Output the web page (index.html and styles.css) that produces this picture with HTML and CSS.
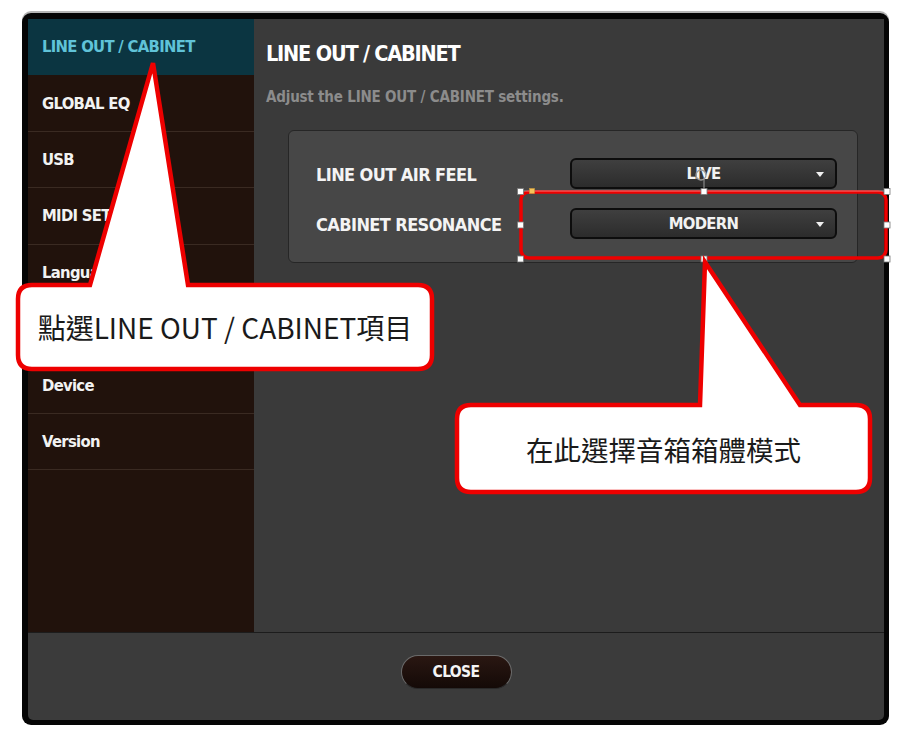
FILE: index.html
```html
<!DOCTYPE html>
<html lang="zh-Hant">
<head>
<meta charset="utf-8">
<title>LINE OUT / CABINET</title>
<link rel="stylesheet" href="styles.css">
</head>
<body>
<div class="window">
  <div class="main">
    <nav class="sidebar">
      <div class="nav-item active">LINE OUT / CABINET</div>
      <div class="nav-item">GLOBAL EQ</div>
      <div class="nav-item">USB</div>
      <div class="nav-item">MIDI SETTINGS</div>
      <div class="nav-item">Language</div>
      <div class="nav-item"></div>
      <div class="nav-item">Device</div>
      <div class="nav-item">Version</div>
    </nav>
    <section class="content">
      <h1 class="title">LINE OUT / CABINET</h1>
      <p class="subtitle">Adjust the LINE OUT / CABINET settings.</p>
      <div class="panel">
        <div class="row">
          <span class="label">LINE OUT AIR FEEL</span>
          <div class="select"><span class="select-value">LIVE</span><i class="caret"></i></div>
        </div>
        <div class="row">
          <span class="label">CABINET RESONANCE</span>
          <div class="select"><span class="select-value">MODERN</span><i class="caret"></i></div>
        </div>
      </div>
    </section>
  </div>
  <footer class="footer">
    <button class="close-btn">CLOSE</button>
  </footer>
</div>

<svg class="annot" width="911" height="739" viewBox="0 0 911 739">
  <rect x="521" y="192" width="365" height="66" rx="8" ry="8" fill="none" stroke="#ee0000" stroke-width="3.5"/>
  <line x1="520" y1="191" x2="887" y2="191" stroke="#ffffff" stroke-width="0.8" opacity="0.6"/>
  <line x1="704" y1="179" x2="704" y2="191" stroke="#9a9a9a" stroke-width="1"/>
  <circle cx="701" cy="175" r="5" fill="none" stroke="#9a9a9a" stroke-width="1.3"/>
  <g fill="#ffffff" stroke="#777" stroke-width="0.8">
    <rect x="517.5" y="188.5" width="6" height="6"/>
    <rect x="701" y="188.5" width="6" height="6"/>
    <rect x="884" y="188.5" width="6" height="6"/>
    <rect x="517.5" y="222" width="6" height="6"/>
    <rect x="884" y="222" width="6" height="6"/>
    <rect x="517.5" y="256" width="6" height="6"/>
    <rect x="701" y="256" width="6" height="6"/>
    <rect x="884" y="256" width="6" height="6"/>
  </g>
  <rect x="529.5" y="188.5" width="5" height="5" fill="#f6c25a" stroke="#c99a3a" stroke-width="0.6"/>
  <path d="M 32 285 H 90 L 153 63 L 188 285 H 418 Q 432 285 432 299 V 355 Q 432 369 418 369 H 32 Q 18 369 18 355 V 299 Q 18 285 32 285 Z"
        fill="#ffffff" stroke="#ee0000" stroke-width="4.5" stroke-linejoin="miter"/>
  <path d="M 471 405 H 700 L 705 262 L 800 405 H 856 Q 870 405 870 419 V 478 Q 870 492 856 492 H 471 Q 457 492 457 478 V 419 Q 457 405 471 405 Z"
        fill="#ffffff" stroke="#ee0000" stroke-width="4.5" stroke-linejoin="miter"/>
</svg>
<div class="callout-text callout-one">點選LINE OUT / CABINET項目</div>
<div class="callout-text callout-two">在此選擇音箱箱體模式</div>
</body>
</html>
```
FILE: styles.css
```css
* { box-sizing: border-box; }
html, body { margin: 0; padding: 0; }
body {
  width: 911px;
  height: 739px;
  background: #ffffff;
  position: relative;
  overflow: hidden;
  font-family: "DejaVu Sans Condensed", "Liberation Sans", sans-serif;
}
.window {
  margin: 13px 0 0 22px;
  width: 867px;
  height: 712px;
  background: #050505;
  border-radius: 9px;
  padding: 6px 5px 5px 6px;
  box-shadow: 0 -2px 0 #b5b5b5;
  display: flex;
  flex-direction: column;
}
.main {
  height: 613px;
  display: flex;
}
.sidebar {
  width: 226px;
  background: #21120c;
  display: flex;
  flex-direction: column;
}
.nav-item {
  height: 56.4px;
  border-bottom: 1px solid #3a2a22;
  padding-left: 14px;
  display: flex;
  align-items: center;
  color: #f2f2f2;
  font-weight: bold;
  font-size: 16.5px;
  letter-spacing: -0.7px;
}
.nav-item.active {
  background: #0b3541;
  color: #60c3d8;
  border-bottom-color: #0b3541;
}
.content {
  flex: 1;
  background: #3a3a3a;
  padding: 22px 0 0 12px;
}
.title {
  margin: 0;
  color: #ffffff;
  font-size: 21.5px;
  line-height: 26px;
  font-weight: bold;
  letter-spacing: -1.2px;
}
.subtitle {
  margin: 21px 0 0 0;
  color: #8c8c8c;
  font-size: 15px;
  line-height: 18px;
  font-weight: bold;
  letter-spacing: -0.2px;
}
.panel {
  margin: 24px 0 0 22px;
  width: 570px;
  height: 133px;
  background: #474747;
  border: 1px solid #262626;
  border-radius: 6px;
  padding: 27px 20px 0 27px;
  display: flex;
  flex-direction: column;
  gap: 19px;
}
.row {
  display: flex;
  align-items: center;
  height: 31px;
}
.label {
  flex: 1;
  color: #f4f4f4;
  font-size: 18px;
  font-weight: bold;
  letter-spacing: -0.6px;
  padding-top: 2px;
}
.select {
  width: 267px;
  height: 31px;
  border: 2px solid #0d0d0d;
  border-radius: 6px;
  background: linear-gradient(#3f3f3f, #2c2c2c);
  display: flex;
  align-items: center;
  justify-content: center;
  position: relative;
}
.select-value {
  color: #f2f2f2;
  font-size: 16.5px;
  font-weight: bold;
  letter-spacing: -0.7px;
}
.caret {
  position: absolute;
  right: 11px;
  top: 12px;
  width: 0;
  height: 0;
  border-left: 4px solid transparent;
  border-right: 4px solid transparent;
  border-top: 5px solid #f0f0f0;
}
.footer {
  flex: 1;
  background: #3b3b3b;
  border-top: 1px solid #1c1c1c;
  border-radius: 0 0 5px 5px;
  display: flex;
  justify-content: center;
  padding-top: 22px;
}
.close-btn {
  width: 111px;
  height: 34px;
  border-radius: 17px;
  border: 1px solid #6a6a6a;
  border-bottom-color: #2a2a2a;
  background: linear-gradient(#2a1712, #140a07);
  color: #f4f4f4;
  font-family: "DejaVu Sans Condensed", "Liberation Sans", sans-serif;
  font-weight: bold;
  font-size: 15.5px;
  letter-spacing: -0.6px;
  padding: 0;
}
.annot {
  position: absolute;
  left: 0;
  top: 0;
  pointer-events: none;
}
.callout-text {
  position: absolute;
  display: flex;
  align-items: center;
  justify-content: center;
  color: #1a1a1a;
  font-family: "Noto Sans CJK TC", "Noto Sans", sans-serif;
  font-size: 27.5px;
  white-space: nowrap;
}
.callout-one {
  left: 18px;
  top: 285px;
  width: 414px;
  height: 84px;
  font-size: 28px;
}
.callout-two {
  left: 457px;
  top: 405px;
  width: 413px;
  height: 87px;
}
```
